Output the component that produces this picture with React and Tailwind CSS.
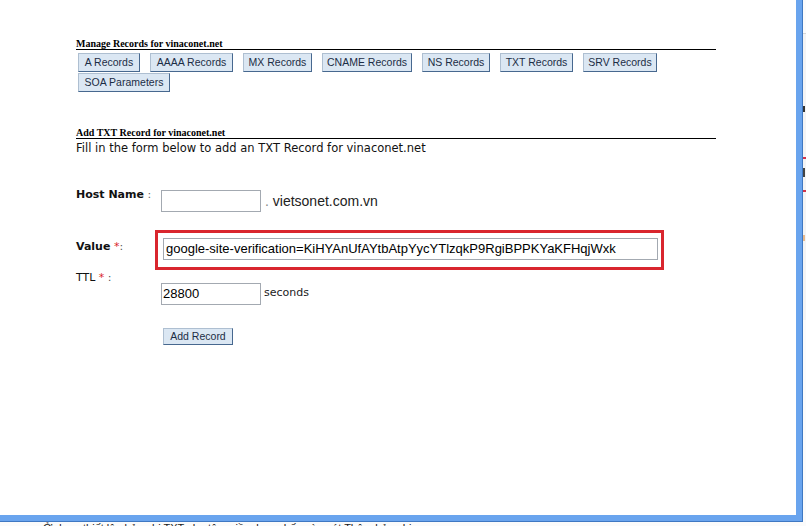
import React from "react";

const TABS = [
  { label: "A Records", w: "w-[62px]" },
  { label: "AAAA Records", w: "w-[83px]" },
  { label: "MX Records", w: "w-[69px]" },
  { label: "CNAME Records", w: "w-[90px]" },
  { label: "NS Records", w: "w-[68px]" },
  { label: "TXT Records", w: "w-[73px]" },
  { label: "SRV Records", w: "w-[74px]" },
  { label: "SOA Parameters", w: "w-[92px]" },
];

const VALUE =
  "google-site-verification=KiHYAnUfAYtbAtpYycYTlzqkP9RgiBPPKYaKFHqjWxk";

function SectionTitle({ children, className = "" }) {
  return (
    <div
      className={`w-[640px] border-b border-black font-['Liberation_Serif',serif] text-[10px] font-bold leading-[10px] text-black ${className}`}
    >
      {children}
    </div>
  );
}

function TabButton({ label, w }) {
  return (
    <button
      type="button"
      className={`${w} h-[19px] border border-[#aebfd1] border-b-[#47688f] border-r-[#47688f] bg-[#dbe7f3] text-center font-['Liberation_Sans',sans-serif] text-[10.5px] leading-[17px] text-[#1b2d45]`}
    >
      {label}
    </button>
  );
}

function Label({ children, className = "" }) {
  return (
    <div
      className={`font-['DejaVu_Sans',sans-serif] text-[11px] text-[#111] ${className}`}
    >
      {children}
    </div>
  );
}

function RightEdge() {
  // sliver of the page behind the window
  return (
    <div className="flex w-[3px] shrink-0 flex-col bg-[#fbfbfb]">
      <div className="h-[33px]" />
      <div className="flex h-[287px] flex-col border-t border-[#d6d6d6] bg-[#f4f4f4]">
        <div className="mt-[72px] h-[6px] w-[2px] bg-[#333]" />
        <div className="mt-[45px] h-[2px] w-[3px] bg-[#d2334a]" />
        <div className="mt-[9px] h-[9px] w-[2px] bg-[#444]" />
        <div className="mt-[13px] h-[2px] w-[3px] bg-[#d2334a]" />
        <div className="mt-[43px] h-[6px] w-[2px] bg-[#e7b98c]" />
      </div>
    </div>
  );
}

function Frame({ children }) {
  // window frame: blue on the right and bottom, darker outer edge
  return (
    <div className="h-[522px] w-[803px] shrink-0 border-b border-r border-[#3f78c2]">
      <div className="h-full w-full border-b-[6px] border-r-[6px] border-[#69a4ee] bg-white">
        {children}
      </div>
    </div>
  );
}

function FormContent() {
  return (
    <div className="flex h-full flex-col items-start pl-[76px] pt-[39px]">
      <SectionTitle>Manage Records for vinaconet.net</SectionTitle>

      <div className="ml-[2px] mt-[3px] flex w-[640px] flex-wrap gap-x-[10px] gap-y-[1px]">
        {TABS.map((t) => (
          <TabButton key={t.label} label={t.label} w={t.w} />
        ))}
      </div>

      <SectionTitle className="mt-[36px]">
        Add TXT Record for vinaconet.net
      </SectionTitle>
      <div className="mt-[3px] font-['DejaVu_Sans',sans-serif] text-[11.5px] leading-[13px] text-[#111]">
        Fill in the form below to add an TXT Record for vinaconet.net
      </div>

      {/* host name */}
      <div className="mt-[33px] flex items-start">
        <Label className="w-[85px] leading-[13px]">
          <span className="font-bold">Host Name</span>
          <span className="text-[#666]"> :</span>
        </Label>
        <div className="mt-[2px] flex items-center">
          <input
            className="h-[22px] w-[100px] border border-[#a3a9b1] bg-white pl-[1px] font-['Liberation_Sans',sans-serif] text-[13px] text-black outline-none"
            defaultValue=""
          />
          <span className="ml-[4px] font-['Liberation_Sans',sans-serif] text-[14px] leading-[16px] text-[#222]">
            <span className="text-[#888]">.</span> vietsonet.com.vn
          </span>
        </div>
      </div>

      {/* value */}
      <div className="mt-[18px] flex items-start">
        <Label className="mt-[10px] w-[79px] leading-[13px]">
          <span className="font-bold">Value</span>
          <span className="text-[#d8232a]"> *</span>
          <span className="text-[#555]">:</span>
        </Label>
        <div className="border-[3px] border-[#d9262e] pb-[7px] pl-[5px] pr-[3px] pt-[2px]">
          <input
            className="h-[22px] w-[495px] border border-[#a3a9b1] bg-white pl-[2px] font-['Liberation_Sans',sans-serif] text-[13px] text-black outline-none"
            defaultValue={VALUE}
          />
        </div>
      </div>

      {/* ttl */}
      <Label className="mt-[2px] leading-[11px]">
        TTL<span className="text-[#d8232a]"> *</span>
        <span className="text-[#555]"> :</span>
      </Label>
      <div className="ml-[85px] flex items-center">
        <input
          className="h-[22px] w-[100px] border border-[#a3a9b1] bg-white pl-[1px] font-['Liberation_Sans',sans-serif] text-[13px] text-black outline-none"
          defaultValue="28800"
        />
        <span className="ml-[3px] font-['DejaVu_Sans',sans-serif] text-[11px] text-[#222]">
          seconds
        </span>
      </div>

      <button
        type="button"
        className="ml-[87px] mt-[23px] h-[17px] w-[70px] border border-[#aebfd1] border-b-[#47688f] border-r-[#47688f] bg-[#dbe7f3] text-center font-['Liberation_Sans',sans-serif] text-[10.5px] leading-[15px] text-[#1b2d45]"
      >
        Add Record
      </button>
    </div>
  );
}

export default function App() {
  return (
    <div className="flex h-[526px] w-[806px] overflow-hidden bg-[#fbfbfb]">
      <div className="flex w-[803px] shrink-0 flex-col">
        <Frame>
          <FormContent />
        </Frame>
        <div className="h-[4px] shrink-0 overflow-hidden pl-[43px] font-['Liberation_Sans',sans-serif] text-[11px] leading-[13px] text-[#222]">
          Ở dạng thiết lập bản ghi TXT cho tên miền, bạn nhấn vào nút Thêm bản ghi
        </div>
      </div>
      <RightEdge />
    </div>
  );
}
